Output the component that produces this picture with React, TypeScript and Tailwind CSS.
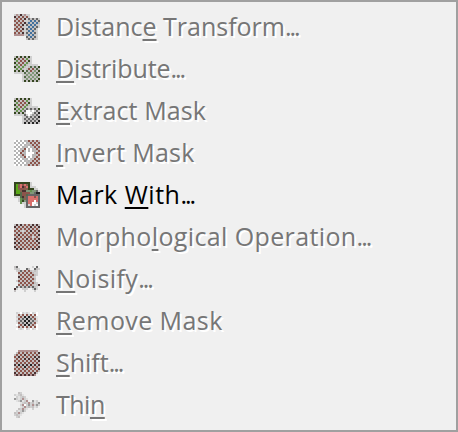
type IconProps = { rows: string[]; dither?: boolean };

const palette: Record<string, string> = {
  r: "#8c544b", d: "#4a3030", g: "#65944e", k: "#222222", b: "#42709c", n: "#666666",
  l: "#d0d0d0", w: "#ffffff", m: "#999999", p: "#d9706c", G: "#59a818", D: "#34451f",
  s: "#7f9878", t: "#536b4b", o: "#85624f", q: "#b09090", v: "#b5b5b5", e: "#e2e2e2",
};

function PixelIcon({ rows, dither = true }: IconProps) {
  return (
    <svg className="size-[26px] shrink-0" viewBox="0 0 13 13" shapeRendering="crispEdges">
      {rows.flatMap((row, y) =>
        [...row].map((c, x) => {
          if (c === ".") return null;
          const pale = dither && (x + y) % 2 === 0 && !"weqlv".includes(c);
          return <rect key={`${x}-${y}`} x={x} y={y} width={1} height={1} fill={pale ? "#c3c0c0" : palette[c]} />;
        }),
      )}
    </svg>
  );
}

const distance = [
  "lqdddqll.....", "drrrrrrl.....", "rrrrrdlnnnnnl", "rrrrrllbbbbbn", "rrrrrdnbbbbbn", "rrrrdlnbbbbnl", "rrrrdllbbbbnl",
  "rrrrdlnbbbnl.", "rrrrdlnbbbnl.", "rrrrdlnbbbnl.", "qqqqqlnbbbnl.", "......nbbbnl.", "......nnnnnl.",
];
const distribute = [
  "DDDDDDDDl....", "DgorrogDl....", "DgrrrrgDl....", "Dgorrrggl....", "Dggrrgglllll.", "DgggggltttttD", "DggggltrrrttD",
  "DDDDDltrrsstD", "llllltrsssstD", "....ltsssgssD", "....ltssssssD", "....ltssssstD", "....lDDDDDDDD",
];
const extract = [
  "DDDDDDDDl....", "DgorrogDl....", "DgrrrrgDl....", "Dgorrrggl....", "Dggrrgglllll.", "DgggggnnnnnnD", "Dggggnwwlwlnk",
  "DDDDDnwwwlnmk", "lllllnlwlmmnk", "....lnnlnmnmk", "....lnmnmnmnk", "....lnnmnmnnk", "....lkkkkkkkk",
];
const invert = [
  "wvwvwvrrrrrrr", "vwvwvwvrrrrrr", "wvwvwvrvrrrrr", "vwvwvrvwvrrrr", "wvwvrrwvwvrrr", "vwvrrvwvwvvrr", "wvwrdvwwwwvrr",
  "vwvrrvwwwvvrr", "wvwvrrwvwvrrr", "vwvwvrvwvrrrr", "wvwvwvrvrrrrr", "vwvwvwvrrrrrr", "wvwvwvrrrrrrr",
];
const mark = [
  "DDDDDDDDl....", "DGoprpoDl....", "DGrpdrpDlll..", "DGorrooDDDll.", "DGGoddssgssnl", "DGGtrrrrssnkk", "DDDtrrtnnnnnn",
  "llltdonppprpn", "..lgtonpppppn", "..lgDsnpppwpn", "...gllnppwwln", ".....lnlpwlwn", ".....lnnnnnnn",
];
const morph = [
  "rdrdrrdrrdrdr", "drrrrrrrdrrrd", "rrrrrrrrrrdrr", "rrrrlrrrdrrrd", "drrrrrrrrrrrr", "rrdrrrrrrrrrd", "rrrrdrrrqlrrr",
  "drrrrrdrrrrrd", "rrrrrrrrrrrdr", "drdrrrrdrrrrd", "rrrrdrrrrrdrr", "drrrrrrdrrrrd", "rdrdrrdrrdrdr",
];
const noisify = [
  "nn.......l.n.", "lnl...nn..ndl", ".lnnrrrrnlnl.", "..rrrrrrrrll.", "..rrrrrrrrnl.", "..drrrrrrrl..", "..rrrrrrrrd..",
  ".lrrrrrrrrl..", "..drrrrrrrnl.", "..rrrrrrrrlnd", ".nlnnnrnrnnl.", "dl..lll..lnl.", "n....l....l..",
];
const remove = [
  ".............", ".............", ".lewlelewlew.", ".erlrerlrerw.", ".lrrnknkrrre.", ".erknkkknrre.", ".lrnkkkkknrl.",
  ".erknkkknrre.", ".wrrnknknrrw.", ".erlrerlrerw.", ".welewlewlew.", ".............", ".............",
];
const shift = [
  "..qqqqqqqqqqe", ".drrrrrdrrrdd", "drrrrdrrrrdrd", "rrdrrkrrrrdrd", "drdrddrddrddd", "rrrkrkrrrkrrd", "rrrrkrrrrrrrd",
  "drkddkddkdddd", "rrrrrkrrrrdrd", "rrrrrrrrrrrrd", "drrrkrrrrrdrd", "drrrrrrrrrdd.", "qdqdqdqdqdq..",
];
const thin = [
  "..ml.........", "lelme........", ".lelml.......", "mlelqle......", ".elmelq..mel.", "...elmlqlmelm", "...lqwlmlqlml",
  "...elqlmlmel.", "..mlqle..l...", ".lelml.......", "mlqle........", "lmle.........", ".lm..........",
];

const items = [
  { before: "Distanc", key: "e", after: " Transform", more: true, icon: distance, tracking: "tracking-[0px]" },
  { before: "", key: "D", after: "istribute", more: true, icon: distribute, tracking: "tracking-[-0.1px]" },
  { before: "", key: "E", after: "xtract Mask", icon: extract, tracking: "tracking-[0.1px]" },
  { before: "", key: "I", after: "nvert Mask", icon: invert, tracking: "tracking-[0.25px]" },
  { before: "Mark ", key: "W", after: "ith", more: true, icon: mark, tracking: "tracking-[0.5px]", enabled: true },
  { before: "Morpho", key: "l", after: "ogical Operation", more: true, icon: morph, tracking: "tracking-[0.38px]" },
  { before: "", key: "N", after: "oisify", more: true, icon: noisify, tracking: "tracking-[0.4px]" },
  { before: "", key: "R", after: "emove Mask", icon: remove, tracking: "tracking-[0.42px]" },
  { before: "", key: "S", after: "hift", more: true, icon: shift, tracking: "tracking-[0px]" },
  { before: "Thi", key: "n", after: "", icon: thin, tracking: "tracking-[-0.5px]" },
];

export default function App() {
  return (
    <div role="menu" className="flex h-[432px] w-[458px] flex-col border-2 border-[#a0a0a0] bg-[#f0f0f0] py-1 pl-3 font-['Open_Sans',sans-serif] text-[25px]">
      {items.map((item) => (
        <div
          key={item.before + item.key + item.after}
          role="menuitem"
          aria-disabled={!item.enabled}
          className="flex h-[42px] items-center gap-4"
        >
          <PixelIcon rows={item.icon} dither={!item.enabled} />
          <span className={`-mt-0.5 whitespace-pre leading-[42px] ${item.tracking} ${item.enabled ? "text-black" : "text-[#767676] [text-shadow:2px_2px_0_#fff]"}`}>
            {item.before}
            <span className="underline decoration-2 underline-offset-[3px] [text-decoration-skip-ink:none]">{item.key}</span>
            {item.after}
            {item.more && <span className="tracking-[-2px]">...</span>}
          </span>
        </div>
      ))}
    </div>
  );
}
